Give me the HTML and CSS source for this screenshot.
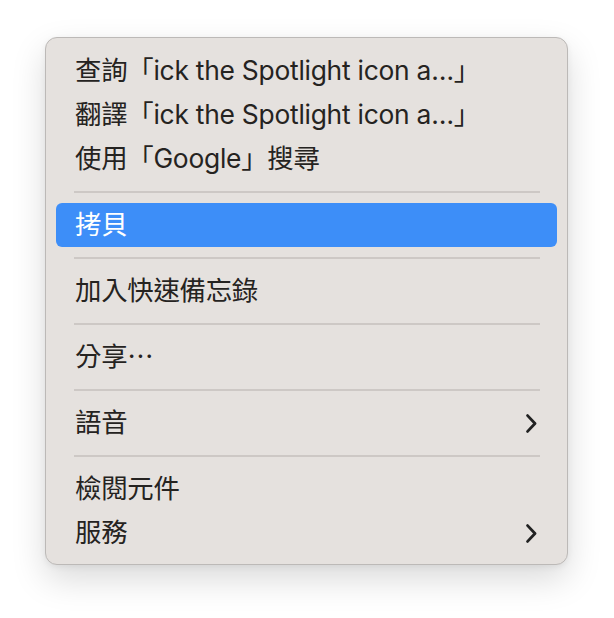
FILE: index.html
```html
<!DOCTYPE html>
<html lang="zh-Hant">
<head>
<meta charset="utf-8">
<title>Context Menu</title>
<link rel="stylesheet" href="styles.css">
</head>
<body>
<div class="menu">
  <div class="item">查詢「ick the Spotlight icon a…」</div>
  <div class="item">翻譯「ick the Spotlight icon a…」</div>
  <div class="item">使用「Google」搜尋</div>
  <div class="sep"></div>
  <div class="item active">拷貝</div>
  <div class="sep"></div>
  <div class="item">加入快速備忘錄</div>
  <div class="sep"></div>
  <div class="item"><span>分享<span class="dots">⋯</span></span></div>
  <div class="sep"></div>
  <div class="item sub"><span>語音</span><svg class="chev" width="11" height="19" viewBox="0 0 11 19"><path d="M1.6 1.6 L9 9.5 L1.6 17.4" fill="none" stroke="#222" stroke-width="2.8" stroke-linecap="round" stroke-linejoin="round"/></svg></div>
  <div class="sep"></div>
  <div class="item">檢閱元件</div>
  <div class="item sub"><span>服務</span><svg class="chev" width="11" height="19" viewBox="0 0 11 19"><path d="M1.6 1.6 L9 9.5 L1.6 17.4" fill="none" stroke="#222" stroke-width="2.8" stroke-linecap="round" stroke-linejoin="round"/></svg></div>
</div>
</body>
</html>
```
FILE: styles.css
```css
html, body {
  margin: 0;
  padding: 0;
  background: #ffffff;
}
body {
  box-sizing: border-box;
  min-height: 618px;
  padding: 37px 0 40px 45px;
}
.menu {
  box-sizing: border-box;
  width: 523px;
  padding: 11px 10px 9px 10px;
  background: #e5e1de;
  border: 1px solid #bcb9b7;
  border-radius: 12px;
  box-shadow: 0 14px 34px rgba(0, 0, 0, 0.15), 0 2px 6px rgba(0, 0, 0, 0.06);
  font-family: "Inter", "Noto Sans CJK TC", sans-serif;
  font-size: 26.4px;
  letter-spacing: -0.25px;
  color: #252321;
}
.item {
  box-sizing: border-box;
  height: 44px;
  display: flex;
  align-items: center;
  justify-content: space-between;
  padding: 0 20px 5px 19px;
  border-radius: 6px;
  white-space: nowrap;
}
.item.active {
  background: #3d8ef8;
  color: #ffffff;
}
.dots {
  font-family: "Noto Sans CJK TC", sans-serif;
}
.chev {
  display: block;
  margin-top: 5px;
}
.sep {
  height: 22px;
  display: flex;
  align-items: center;
  padding: 0 17px 0 18px;
}
.sep::before {
  content: "";
  flex: 1;
  height: 2px;
  background: #cdc8c5;
}
```
